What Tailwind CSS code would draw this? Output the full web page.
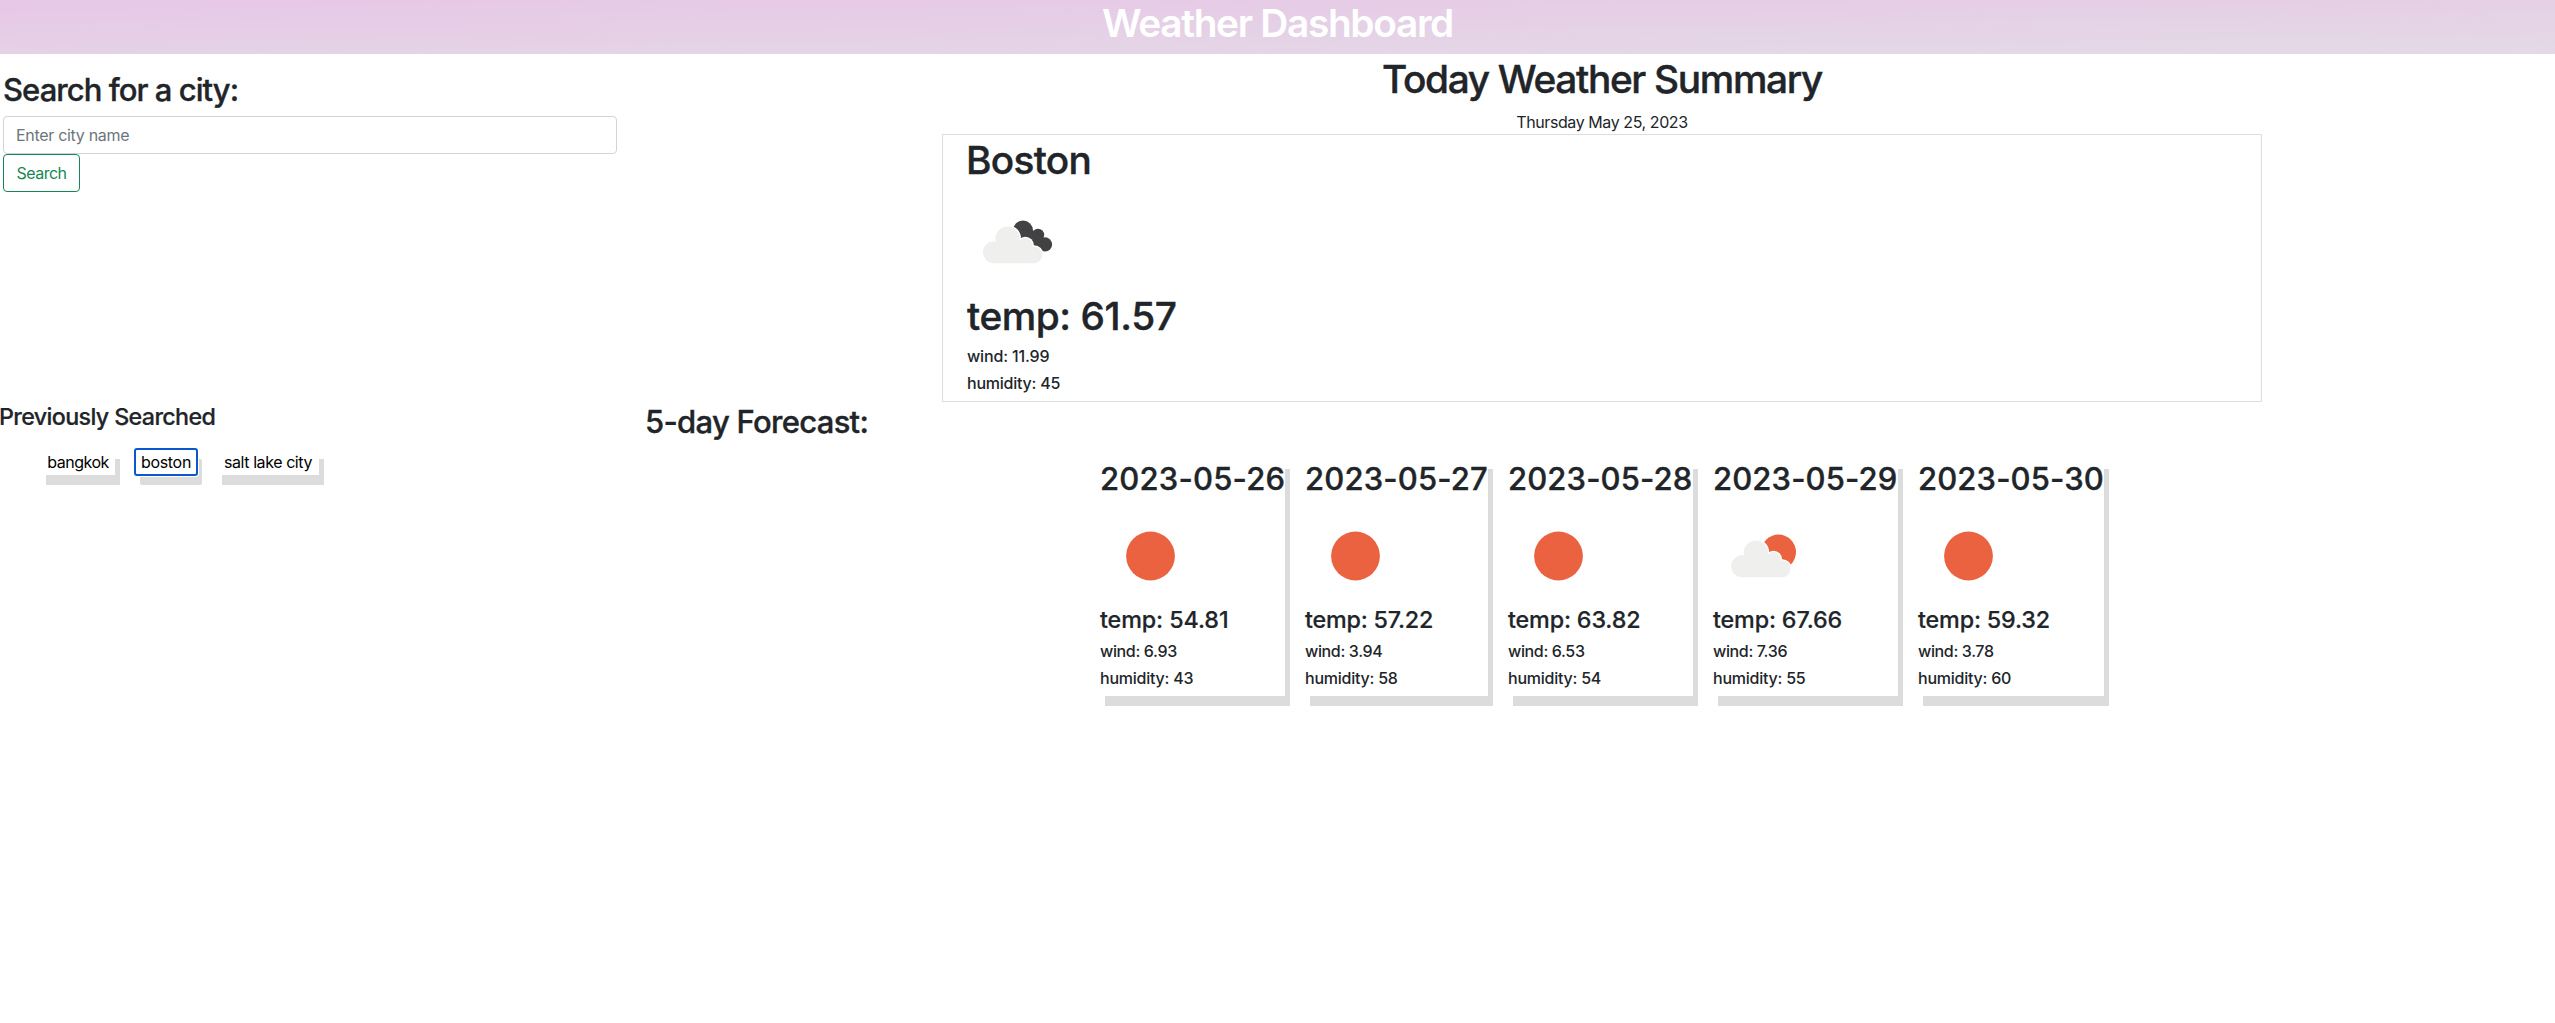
<!DOCTYPE html>
<html lang="en">
<head>
<meta charset="utf-8">
<title>Weather Dashboard</title>
<script src="https://cdn.jsdelivr.net/npm/@tailwindcss/browser@4"></script>
</head>
<body class="min-h-screen bg-white text-[#212529] font-[Inter,sans-serif] text-base">
<svg class="hidden">
  <defs>
    <g id="cloud">
      <g fill="#fff"><circle cx="27" cy="60.2" r="12"/><circle cx="40.6" cy="46.6" r="13.4"/><circle cx="58.3" cy="53.4" r="8.6"/><circle cx="67" cy="62.9" r="9.6"/></g>
      <g fill="#efefed"><circle cx="27" cy="60.2" r="11"/><circle cx="40.6" cy="46.6" r="12.1"/><circle cx="58.3" cy="53.4" r="7.3"/><circle cx="67" cy="62.9" r="8.3"/><path d="M27 71.2V52h26l14 5v14.2z"/></g>
    </g>
    <symbol id="sunny" viewBox="0 0 100 100"><circle cx="50.5" cy="50" r="24.4" fill="#eb6240"/></symbol>
    <symbol id="partly" viewBox="0 0 100 100"><circle cx="65.5" cy="46.1" r="17.5" fill="#eb6240"/><use href="#cloud" x="2.2" y="0"/></symbol>
    <symbol id="broken" viewBox="0 0 100 100"><g fill="#424244"><circle cx="56" cy="38.5" r="10"/><circle cx="71" cy="43" r="6.2"/><circle cx="78" cy="52.4" r="7.1"/><path d="M52 36l14 3 10 7-1 13-18-5z"/></g><use href="#cloud"/></symbol>
  </defs>
</svg>

<header class="h-[54px] bg-[linear-gradient(179deg,#e7c7e6,#e3dae6)] text-center text-white">
  <h1 class="text-[38.8px] leading-[45px] font-semibold tracking-[-1.32px]">Weather Dashboard</h1>
</header>

<main>
  <div class="flex h-[348px]">
    <form class="ml-[3px] w-[614px] pt-[17px]">
      <h2 class="mb-2 text-[31px] leading-[37px] font-medium tracking-[-0.95px] [-webkit-text-stroke:0.35px]">Search for a city:</h2>
      <input type="text" placeholder="Enter city name" class="block h-[38px] w-full rounded border border-[#ced4da] px-3 tracking-[-0.31px] placeholder:text-[#6c757d]">
      <button type="button" class="block h-[38px] w-[77px] rounded border border-[#198754] text-[#198754] tracking-[-0.55px]">Search</button>
    </form>
    <section class="ml-[325px] w-[1320px]">
      <h1 class="text-center text-[38.8px] leading-[49px] font-medium tracking-[-1.33px] [-webkit-text-stroke:0.4px]">Today Weather Summary</h1>
      <p class="mt-2 text-center leading-[23px] tracking-[-0.42px]">Thursday May 25, 2023</p>
      <div class="h-[268px] border border-[#dadee2] pl-6">
        <h1 class="-ml-px text-[38.8px] leading-[50px] font-medium tracking-[-0.7px] [-webkit-text-stroke:0.4px]">Boston</h1>
        <svg class="mt-[6.5px] block size-[100px]"><use href="#broken"/></svg>
        <h1 class="text-[38.8px] leading-[48px] font-medium tracking-[-0.43px] [-webkit-text-stroke:0.4px]">temp: 61.57</h1>
        <h6 class="mt-[7px] leading-[19px] font-medium tracking-[-0.15px]">wind: 11.99</h6>
        <h6 class="mt-2 leading-[19px] font-medium tracking-[-0.23px]">humidity: 45</h6>
      </div>
    </section>
  </div>

  <div class="flex">
    <section class="w-[645px]">
      <h4 class="-ml-px text-[23.3px] leading-[29px] font-medium tracking-[-0.65px] [-webkit-text-stroke:0.2px]">Previously Searched</h4>
      <div class="mt-[18px] ml-[41px] flex gap-5 text-black">
        <button class="h-[26px] w-[74px] bg-white tracking-[-0.5px] shadow-[5px_10px_#dcdcdc]">bangkok</button>
        <button class="h-[26px] w-[62px] rounded-[2px] bg-white tracking-[-0.3px] shadow-[0_0_0_2px_#fff,5px_10px_#dcdcdc] outline-2 -outline-offset-1 outline-[#0b57d0]">boston</button>
        <button class="h-[26px] w-[102px] bg-white tracking-[-0.42px] shadow-[5px_10px_#dcdcdc]">salt lake city</button>
      </div>
    </section>
    <h2 class="w-[455px] text-[31px] leading-[39px] font-medium tracking-[-0.71px] [-webkit-text-stroke:0.35px]">5-day Forecast:</h2>
    <section class="mt-[57px] flex gap-5 font-medium">
      <article class="h-[237px] w-[185px] shadow-[5px_10px_#dcdcdc]">
        <h2 class="mb-[6.6px] text-[31px] leading-[40.4px] tracking-[0.2px] whitespace-nowrap [-webkit-text-stroke:0.35px]">2023-05-26</h2>
        <svg class="block size-[100px]"><use href="#sunny"/></svg>
        <h4 class="text-[23.3px] leading-[28px] tracking-[-0.09px] [-webkit-text-stroke:0.2px]">temp: 54.81</h4>
        <h6 class="mt-2 leading-[19px] tracking-[-0.35px]">wind: 6.93</h6>
        <h6 class="mt-2 leading-[19px] tracking-[-0.23px]">humidity: 43</h6>
      </article>
      <article class="h-[237px] w-[183px] shadow-[5px_10px_#dcdcdc]">
        <h2 class="mb-[6.6px] text-[31px] leading-[40.4px] tracking-[0.15px] whitespace-nowrap [-webkit-text-stroke:0.35px]">2023-05-27</h2>
        <svg class="block size-[100px]"><use href="#sunny"/></svg>
        <h4 class="text-[23.3px] leading-[28px] tracking-[-0.2px] [-webkit-text-stroke:0.2px]">temp: 57.22</h4>
        <h6 class="mt-2 leading-[19px] tracking-[-0.35px]">wind: 3.94</h6>
        <h6 class="mt-2 leading-[19px] tracking-[-0.23px]">humidity: 58</h6>
      </article>
      <article class="h-[237px] w-[185px] shadow-[5px_10px_#dcdcdc]">
        <h2 class="mb-[6.6px] text-[31px] leading-[40.4px] tracking-[0.12px] whitespace-nowrap [-webkit-text-stroke:0.35px]">2023-05-28</h2>
        <svg class="block size-[100px]"><use href="#sunny"/></svg>
        <h4 class="text-[23.3px] leading-[28px] tracking-[-0.15px] [-webkit-text-stroke:0.2px]">temp: 63.82</h4>
        <h6 class="mt-2 leading-[19px] tracking-[-0.35px]">wind: 6.53</h6>
        <h6 class="mt-2 leading-[19px] tracking-[-0.23px]">humidity: 54</h6>
      </article>
      <article class="h-[237px] w-[185px] shadow-[5px_10px_#dcdcdc]">
        <h2 class="mb-[6.6px] text-[31px] leading-[40.4px] tracking-[0.12px] whitespace-nowrap [-webkit-text-stroke:0.35px]">2023-05-29</h2>
        <svg class="block size-[100px]"><use href="#partly"/></svg>
        <h4 class="text-[23.3px] leading-[28px] tracking-[-0.15px] [-webkit-text-stroke:0.2px]">temp: 67.66</h4>
        <h6 class="mt-2 leading-[19px] tracking-[-0.35px]">wind: 7.36</h6>
        <h6 class="mt-2 leading-[19px] tracking-[-0.23px]">humidity: 55</h6>
      </article>
      <article class="h-[237px] w-[186px] shadow-[5px_10px_#dcdcdc]">
        <h2 class="mb-[6.6px] text-[31px] leading-[40.4px] tracking-[0.12px] whitespace-nowrap [-webkit-text-stroke:0.35px]">2023-05-30</h2>
        <svg class="block size-[100px]"><use href="#sunny"/></svg>
        <h4 class="text-[23.3px] leading-[28px] tracking-[-0.15px] [-webkit-text-stroke:0.2px]">temp: 59.32</h4>
        <h6 class="mt-2 leading-[19px] tracking-[-0.35px]">wind: 3.78</h6>
        <h6 class="mt-2 leading-[19px] tracking-[-0.23px]">humidity: 60</h6>
      </article>
    </section>
  </div>
</main>
</body>
</html>
